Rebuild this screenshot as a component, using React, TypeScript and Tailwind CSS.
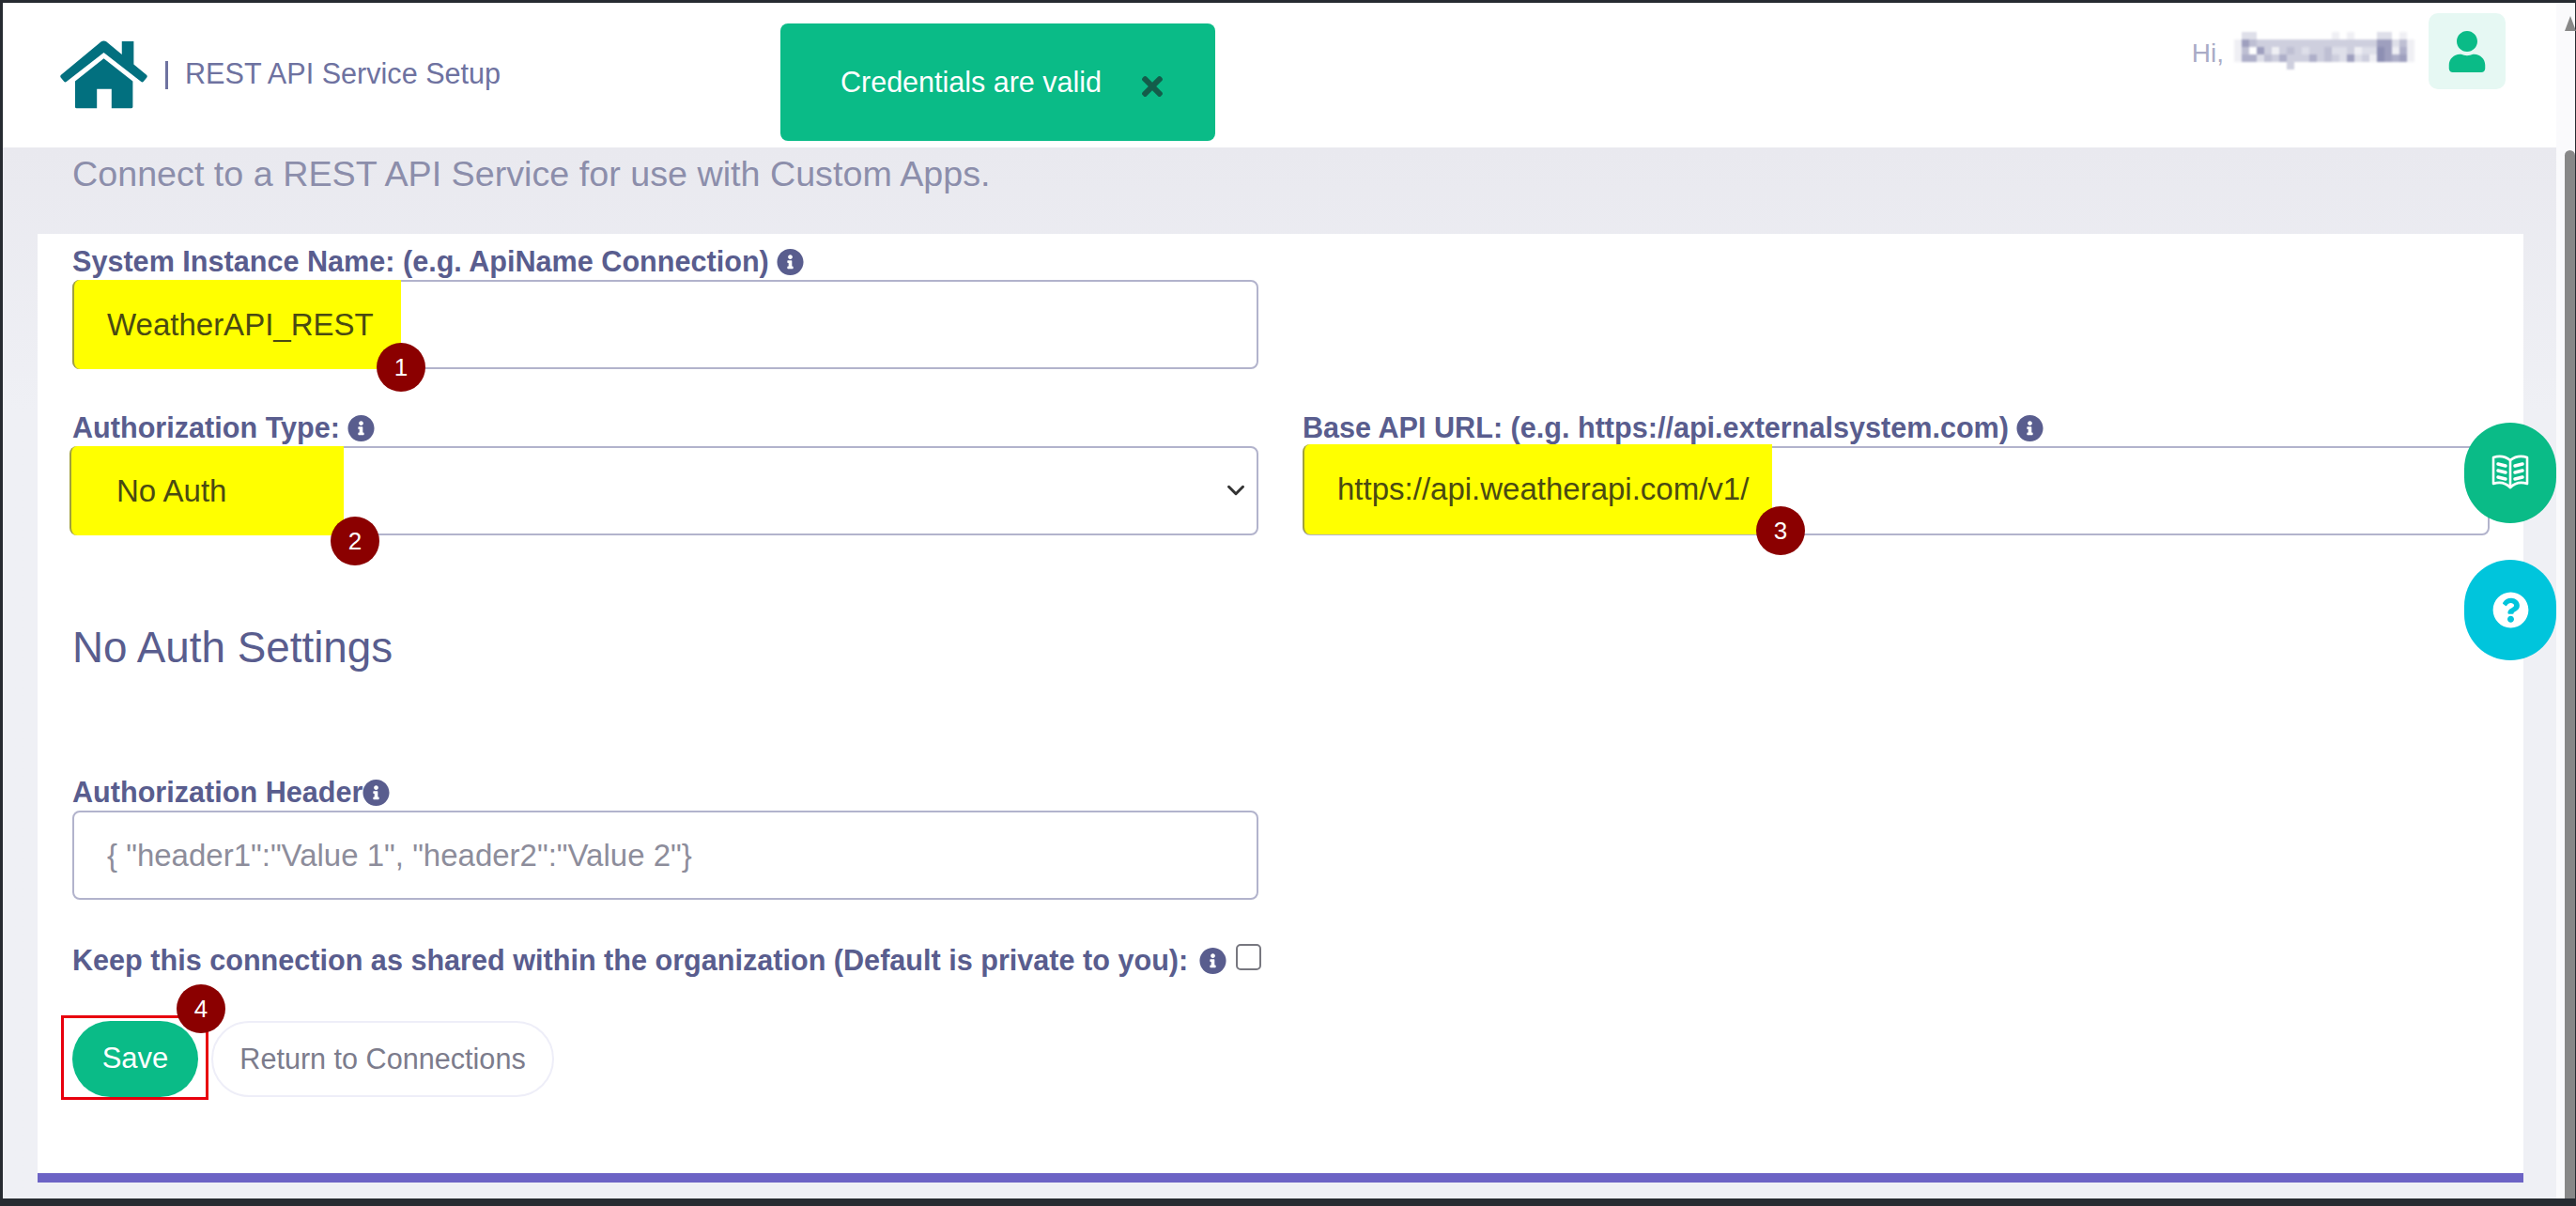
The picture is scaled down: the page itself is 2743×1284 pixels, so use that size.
import React from 'react';
import { FaInfoCircle, FaQuestionCircle, FaTimes, FaUser } from 'react-icons/fa';
import { ChevronDown } from 'lucide-react';

const mosaic = [
  [0, 2, 2, 0, 0, 0, 0, 0, 0, 0, 0, 0, 0, 1, 0, 1, 0, 0, 0, 2, 2, 0, 1, 0],
  [1, 6, 4, 3, 3, 3, 3, 3, 3, 3, 3, 3, 3, 3, 3, 3, 3, 3, 3, 6, 6, 2, 4, 1],
  [1, 4, 0, 6, 3, 1, 3, 4, 3, 2, 3, 3, 4, 2, 2, 3, 1, 2, 2, 7, 6, 1, 5, 1],
  [1, 5, 5, 2, 4, 3, 5, 3, 3, 3, 5, 3, 4, 3, 2, 6, 2, 3, 1, 7, 6, 5, 6, 1],
  [0, 0, 0, 0, 0, 0, 0, 3, 0, 0, 0, 0, 0, 0, 0, 0, 0, 0, 0, 0, 0, 0, 0, 0],
];

const HomeLogo = () => (
  <svg width="93" height="73" viewBox="0 0 280 218" fill="#02707f">
    <path d="M132 3 Q140 -2 148 3 L198 44 V2 H236 V76 L277 110 Q281 114 278 118 L268 130 Q264 135 259 131 L140 38 L21 131 Q16 135 12 130 L2 118 Q-1 114 3 110 Z" />
    <path d="M140 57 L233 130 V212 Q233 217 228 217 H165 V155 H118 V217 H53 Q48 217 48 212 V130 Z" />
  </svg>
);

const BookIcon = () => (
  <svg width="40" height="38" viewBox="0 0 40 38" fill="none" stroke="white" strokeWidth="2.6" strokeLinecap="round" strokeLinejoin="round">
    <path d="M20 7 C15 3 8 2 2 4 V32 C8 30 15 31 20 36 C25 31 32 30 38 32 V4 C32 2 25 3 20 7 Z" />
    <path d="M20 7 V36" />
    <path d="M7 11 L15 13 M7 18 L15 20 M7 25 L15 27 M33 11 L25 13 M33 18 L25 20 M33 25 L25 27" strokeWidth="3.4" />
  </svg>
);

const Badge = ({ n, className }: { n: number; className: string }) => (
  <div className={`absolute z-10 flex h-[52px] w-[52px] items-center justify-center rounded-full bg-[#8b0000] text-[26px] text-white ${className}`}>
    {n}
  </div>
);

const Label = ({ text, gap = 'ml-[8px]' }: { text: string; gap?: string }) => (
  <div className="flex h-[35px] items-center whitespace-nowrap pb-[4px] text-[30.6px] font-bold text-[#595d8e]">
    <span>{text}</span>
    <FaInfoCircle className={`${gap} h-[30px] w-[29px] shrink-0 text-[#595d8e]`} />
  </div>
);

const App: React.FC = () => {
  return (
    <div className="h-[1284px] w-[2743px] overflow-hidden bg-[#272b31] pb-[8px] pl-[3px] pr-[1px] pt-[3px] font-['Liberation_Sans',Arial,sans-serif]">
      <div className="flex h-full">
        <div className="relative flex min-w-0 flex-1 flex-col">
          {/* header */}
          <header className="flex h-[154px] items-start justify-between bg-white pl-[61px] pr-[54px]">
            <div className="flex items-center pt-[40px]">
              <HomeLogo />
              <span className="ml-[19px] h-[30px] w-[3px] bg-[#6e72a0]" />
              <span className="mb-[2px] ml-[18px] text-[30.6px] text-[#6e72a0]">REST API Service Setup</span>
            </div>
            <div className="flex items-start">
              <span className="pt-[33px] text-[28px] text-[#a9abc6]">Hi,</span>
              <svg width="192" height="40" className="ml-[11px] mt-[31px] blur-[1px]" viewBox="0 0 192 40">
                {mosaic.map((row, y) =>
                  row.map((v, x) => (
                    <rect key={`${x}-${y}`} x={x * 8} y={y * 8} width="8" height="8" fill="#7d7fa8" fillOpacity={v / 8} />
                  )),
                )}
              </svg>
              <div className="ml-[15px] mt-[11px] flex h-[81px] w-[82px] items-center justify-center rounded-[10px] bg-[#e6f8f3]">
                <FaUser className="h-[44px] w-[40px] text-[#0abb87]" />
              </div>
            </div>
          </header>

          {/* toast */}
          <div className="absolute left-[828px] top-[22px] flex h-[125px] w-[463px] items-center rounded-[8px] bg-[#0abb87] pl-[64px] text-[30.5px] text-white">
            <span>Credentials are valid</span>
            <FaTimes className="ml-[40px] mt-[8px] h-[32px] w-[28px] text-[#145c4a]" />
          </div>

          <main className="flex min-h-0 flex-1 flex-col bg-gradient-to-b from-[#e9e9ef] to-[#eff0f5] to-[25%] pl-[37px] pr-[35px]">
            <div className="flex h-[92px] items-start pl-[37px] pt-[6px] text-[37.7px] leading-[44px] text-[#8c8eab]">
              Connect to a REST API Service for use with Custom Apps.
            </div>

            <section className="border-b-[10px] border-[#6c63c5] bg-white pb-[81px] pl-[37px] pr-[36px] pt-[14px]">
              <div className="w-[1263px]">
                <Label text="System Instance Name: (e.g. ApiName Connection)" />
                <div className="relative flex h-[95px] items-stretch rounded-[8px] border-2 border-[#b2b3cc] text-[33px] text-[#4a4a12]">
                  <div className="-mb-[2px] -ml-[2px] -mt-[2px] flex w-[350px] items-center rounded-l-[8px] border-l-2 border-[#a0a040] bg-[#ffff00] pl-[35px]">WeatherAPI_REST</div>
                  <Badge n={1} className="left-[322px] top-[65px]" />
                </div>
              </div>

              <div className="mt-[47px] grid grid-cols-[1263px_1264px] gap-x-[47px]">
                <div>
                  <Label text="Authorization Type:" />
                  <div className="relative flex h-[95px] items-stretch rounded-[8px] border-2 border-[#b2b3cc] text-[33px] text-[#4a4a12]">
                    <div className="-mb-[2px] -ml-[5px] -mt-[2px] flex w-[292px] items-center rounded-l-[8px] border-l-2 border-[#a0a040] bg-[#ffff00] pl-[48px]">No Auth</div>
                    <ChevronDown className="absolute right-[7px] top-[30px] h-[30px] w-[30px] text-[#333]" strokeWidth={2.4} />
                    <Badge n={2} className="left-[273px] top-[73px]" />
                  </div>
                </div>
                <div>
                  <Label text="Base API URL: (e.g. https://api.externalsystem.com)" />
                  <div className="relative flex h-[95px] items-stretch rounded-[8px] border-2 border-[#b2b3cc] text-[33px] text-[#4a4a12]">
                    <div className="-mb-[1px] -ml-[2px] -mt-[4px] flex w-[500px] items-center rounded-l-[8px] border-l-2 border-[#a0a040] bg-[#ffff00] pl-[35px]">https://api.weatherapi.com/v1/</div>
                    <Badge n={3} className="left-[481px] top-[62px]" />
                  </div>
                </div>
              </div>

              <h2 className="mt-[95px] h-[163px] text-[45.8px] font-normal leading-[50px] text-[#595d8e]">No Auth Settings</h2>

              <div className="w-[1263px]">
                <Label text="Authorization Header" gap="ml-0" />
                <div className="flex h-[95px] items-center rounded-[8px] border-2 border-[#b2b3cc] pl-[35px] text-[33px] text-[#8d8d9b]">
                  {'{ "header1":"Value 1", "header2":"Value 2"}'}
                </div>
              </div>

              <div className="mt-[47px] flex h-[35px] items-center whitespace-nowrap text-[30.6px] font-bold text-[#595d8e]">
                <span>Keep this connection as shared within the organization (Default is private to you):</span>
                <FaInfoCircle className="ml-[12px] h-[30px] w-[29px] shrink-0" />
                <span className="mb-[8px] ml-[10px] h-[28px] w-[27px] shrink-0 rounded-[5px] border-2 border-[#77777f] bg-white" />
              </div>

              <div className="relative mt-[47px] flex items-center">
                <button className="h-[81px] w-[134px] rounded-full bg-[#0abb87] text-[31px] text-white">Save</button>
                <button className="ml-[14px] h-[81px] w-[365px] rounded-full border-2 border-[#eeeef8] text-[30.6px] text-[#7c7c8c]">Return to Connections</button>
                <div className="absolute -left-[12px] -top-[6px] h-[90px] w-[157px] border-[3px] border-[#e8000d]" />
                <Badge n={4} className="left-[111px] -top-[39px]" />
              </div>
            </section>
          </main>

          {/* floating buttons */}
          <div className="absolute right-0 top-[447px] flex flex-col gap-[39px]">
            <div className="flex h-[107px] w-[98px] items-center justify-center rounded-full bg-[#0abb87] pb-[3px]">
              <BookIcon />
            </div>
            <div className="flex h-[107px] w-[98px] items-center justify-center rounded-full bg-[#00c5dc]">
              <FaQuestionCircle className="h-[39px] w-[39px] text-white" />
            </div>
          </div>
        </div>

        {/* scrollbar */}
        <div className="flex w-[20px] justify-end bg-[#fafafc]">
          <div className="flex w-[11px] flex-col">
            <div className="mt-[14px] h-0 w-0 border-x-[6px] border-b-[16px] border-x-transparent border-b-[#888]" />
            <div className="mt-[127px] flex-1 rounded-t-[6px] bg-[#888]" />
          </div>
        </div>
      </div>
    </div>
  );
};

export default App;
